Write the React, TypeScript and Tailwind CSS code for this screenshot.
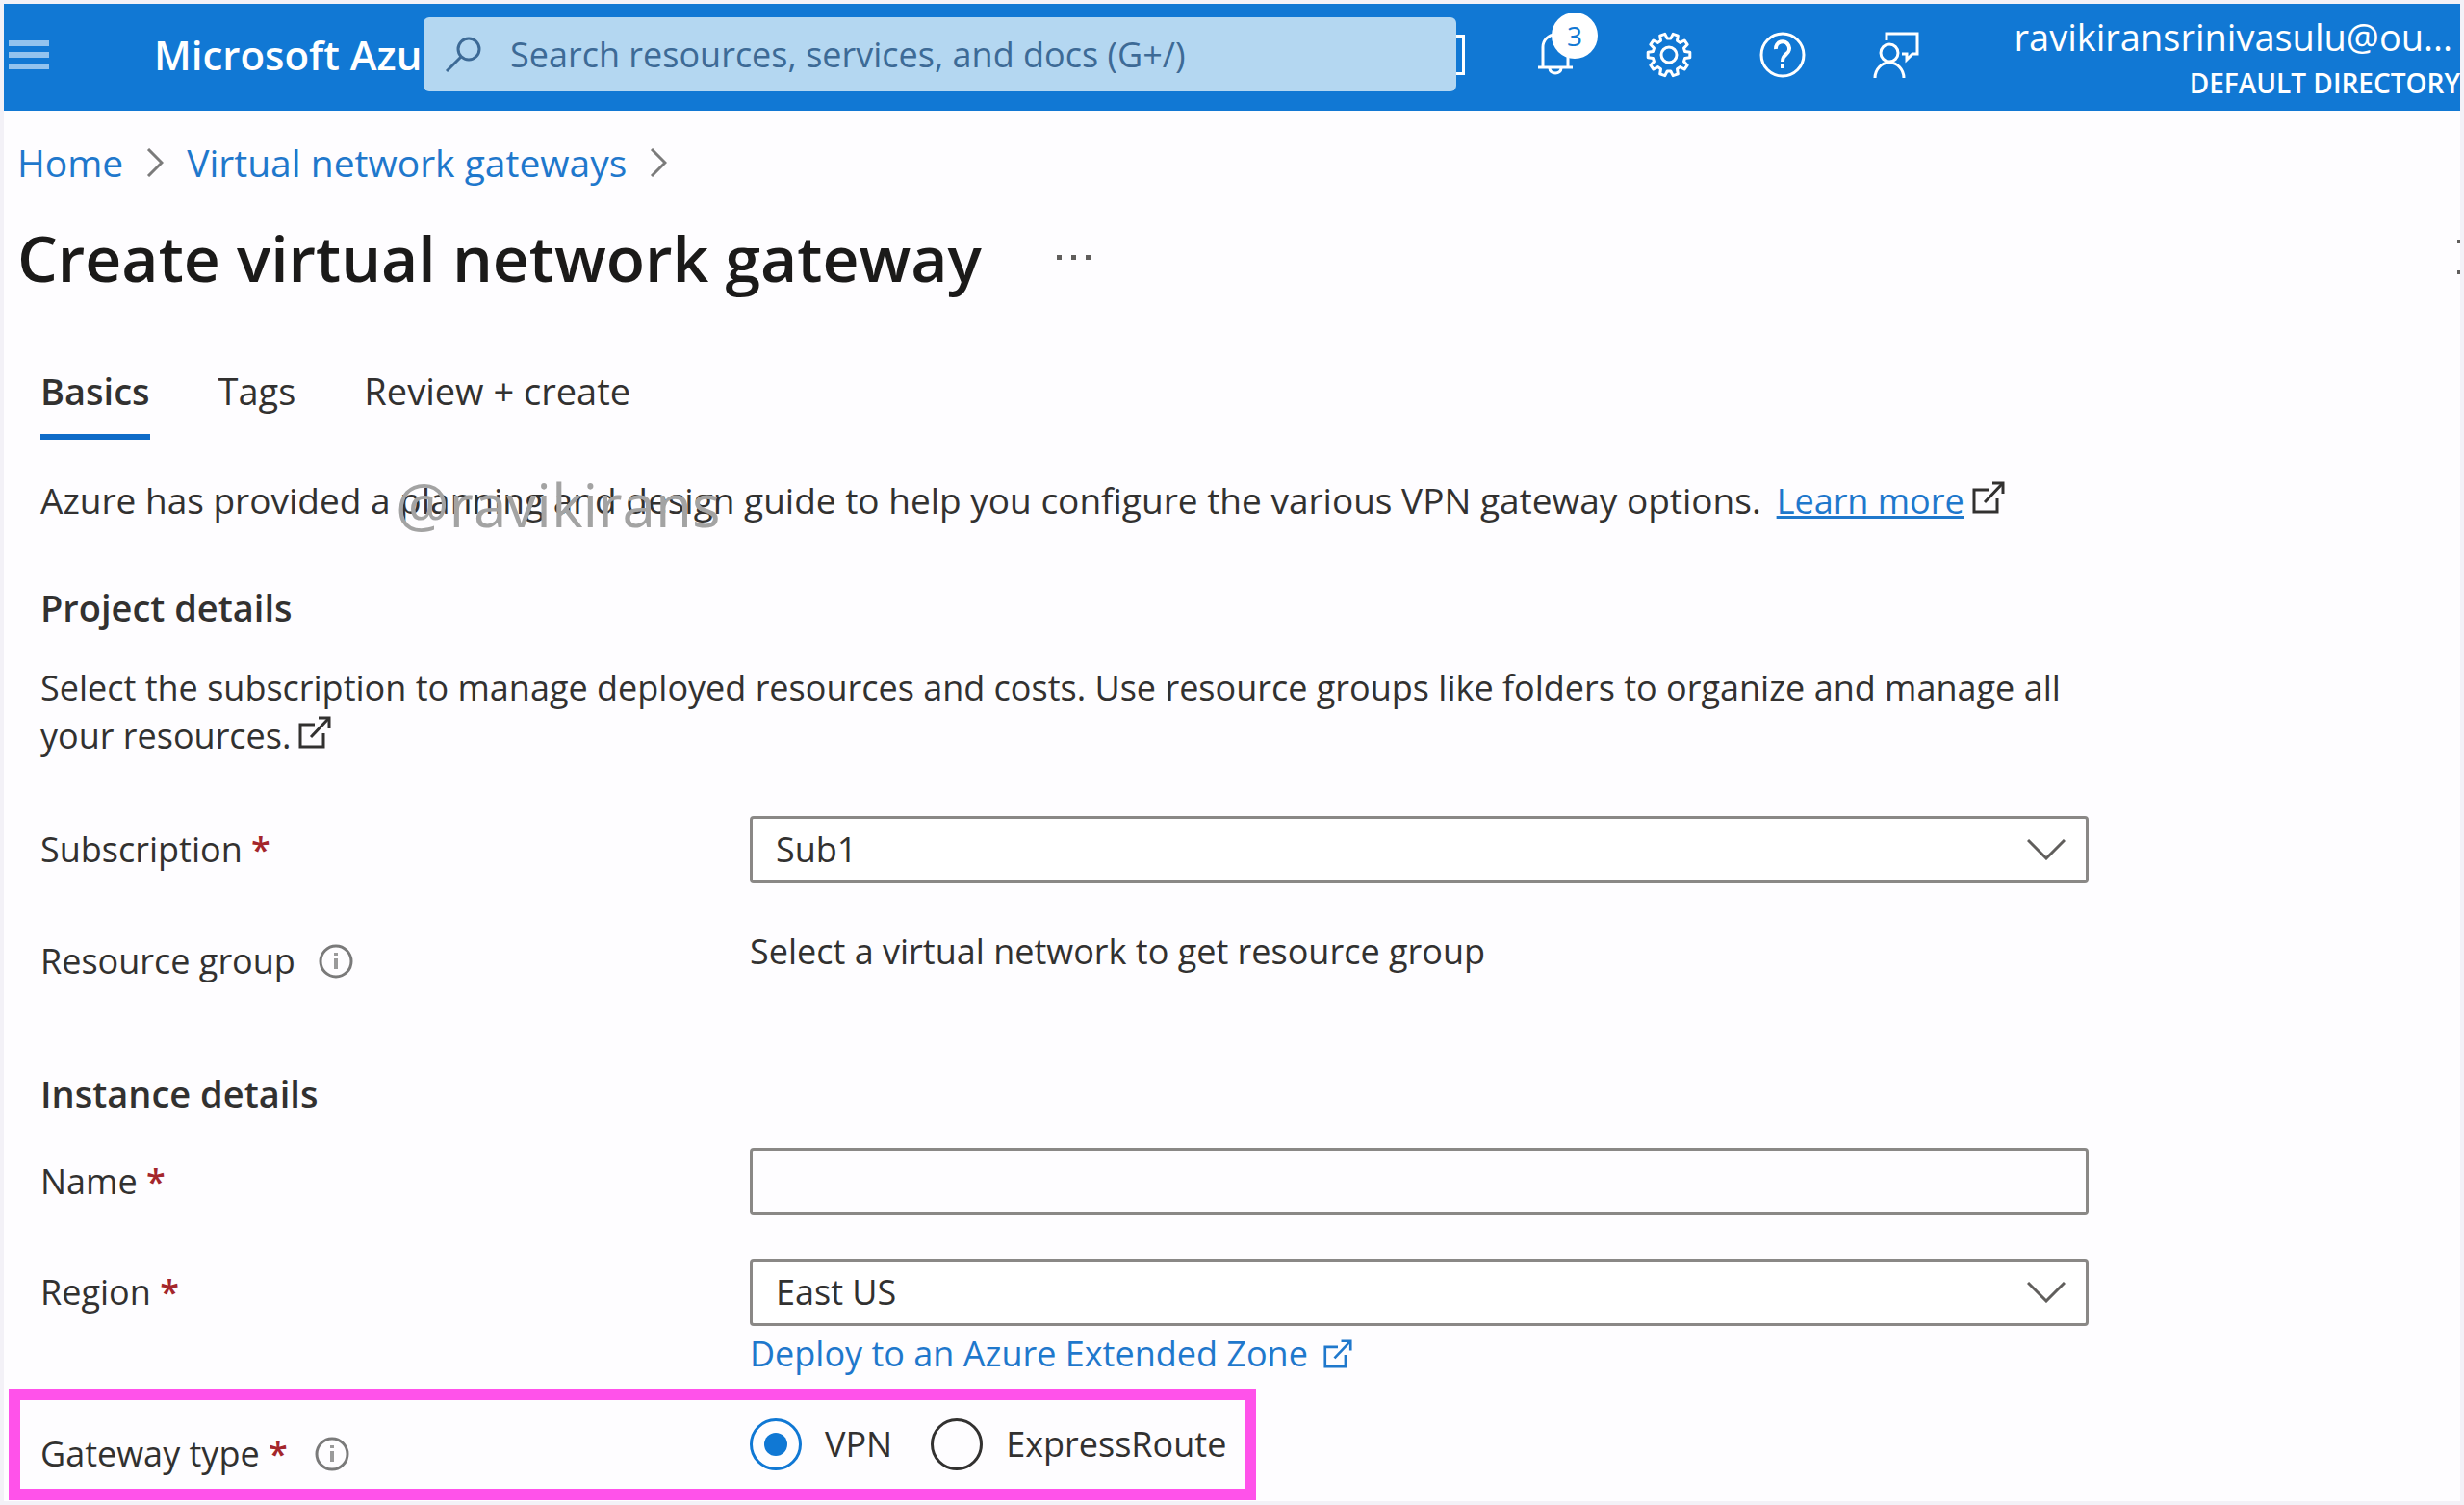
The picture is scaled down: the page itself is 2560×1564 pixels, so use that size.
import { useState } from "react";
import type { ReactNode } from "react";

function SearchIcon() {
  return (
    <svg viewBox="0 0 40 40" className="size-10 shrink-0" fill="none" stroke="#3d6a96" strokeWidth="3" aria-hidden="true">
      <circle cx="25" cy="14" r="11" />
      <path d="M17 22 L2 37" />
    </svg>
  );
}

function BellIcon() {
  return (
    <svg viewBox="0 0 48 48" className="size-12" fill="none" stroke="white" strokeWidth="3" aria-hidden="true">
      <path d="M11 37 V16 a13 13 0 0 1 26 0 V37" />
      <path d="M6 37 H42" />
      <path d="M18 38 a6 5 0 0 0 12 0" />
    </svg>
  );
}

// ten teeth, starting from the valley at twelve o'clock
const gearPoints = Array.from({ length: 10 }, (_, i) =>
  [
    [-6, 17],
    [6, 17],
    [11, 22],
    [25, 22],
  ].map(([offset, radius]) => {
    const angle = ((i * 36 + offset - 90) * Math.PI) / 180;
    return `${(24 + radius * Math.cos(angle)).toFixed(1)},${(24 + radius * Math.sin(angle)).toFixed(1)}`;
  }),
)
  .flat()
  .join(" ");

function GearIcon() {
  return (
    <svg viewBox="0 0 48 48" className="size-12" fill="none" stroke="white" strokeWidth="3" strokeLinejoin="round" aria-hidden="true">
      <circle cx="24" cy="24" r="8" />
      <polygon points={gearPoints} />
    </svg>
  );
}

function HelpIcon() {
  return (
    <svg viewBox="0 0 48 48" className="size-12" fill="none" stroke="white" aria-hidden="true">
      <circle cx="24" cy="24" r="22" strokeWidth="3" />
      <path d="M17 18 a7 7 0 1 1 11 5 C25 26 24 27 24 31" strokeWidth="4" />
      <path d="M24 34 v4" strokeWidth="4" />
    </svg>
  );
}

function FeedbackIcon() {
  return (
    <svg viewBox="0 0 48 48" className="size-12" fill="none" stroke="white" strokeWidth="3" aria-hidden="true">
      <path d="M14 9 V2 H46 V23 H41 L35 29 V23 H30" />
      <circle cx="17" cy="22" r="9" />
      <path d="M2 48 a15 16 0 0 1 30 0" />
    </svg>
  );
}

function ExternalIcon({ className }: { className: string }) {
  return (
    <svg viewBox="0 0 34 34" className={className} fill="none" stroke="currentColor" strokeWidth="3" aria-hidden="true">
      <path d="M17 9 H2 V32 H26 V18" />
      <path d="M13 22 L31 3" />
      <path d="M21 2 H32 V13" />
    </svg>
  );
}

function InfoIcon() {
  return (
    <svg viewBox="0 0 36 36" className="size-9" fill="none" aria-hidden="true">
      <circle cx="18" cy="18" r="16" stroke="#7a7a7a" strokeWidth="3" />
      <path d="M18 15 v11 M18 9 v3" stroke="#9a9a9a" strokeWidth="4" />
    </svg>
  );
}

function Crumb() {
  return (
    <svg viewBox="0 0 18 30" className="h-[30px] w-[18px]" fill="none" stroke="#7b7b7b" strokeWidth="3" aria-hidden="true">
      <path d="M2 1 L16 15 L2 29" />
    </svg>
  );
}

function Required() {
  return <span className="font-semibold text-[#a4262c]"> *</span>;
}

function Row({ label, children, className = "" }: { label: ReactNode; children: ReactNode; className?: string }) {
  return (
    <div className={`flex items-center ${className}`}>
      <div className="flex w-[737px] shrink-0 items-center">{label}</div>
      <div className="min-w-0 flex-1">{children}</div>
    </div>
  );
}

function Select({ id, options }: { id: string; options: string[] }) {
  return (
    <div className="relative">
      <select
        id={id}
        className="block h-[70px] w-full appearance-none rounded-sm border-3 border-[#8a8886] bg-white px-6 text-[#323130]"
      >
        {options.map((option) => (
          <option key={option}>{option}</option>
        ))}
      </select>
      <svg
        viewBox="0 0 40 22"
        className="pointer-events-none absolute top-6 right-6 h-[22px] w-10"
        fill="none"
        stroke="#605e5c"
        strokeWidth="3"
        aria-hidden="true"
      >
        <path d="M1 1 L20 20 L39 1" />
      </svg>
    </div>
  );
}

function Radio({ label, checked, onChange }: { label: string; checked: boolean; onChange: () => void }) {
  return (
    <label className="flex items-center gap-6">
      <span className="relative flex size-[54px] items-center justify-center">
        <input
          type="radio"
          name="gateway-type"
          checked={checked}
          onChange={onChange}
          className="peer absolute inset-0 appearance-none rounded-full border-3 border-[#323130] checked:border-[#1078d4]"
        />
        <span className="size-6 rounded-full peer-checked:bg-[#1078d4]" />
      </span>
      {label}
    </label>
  );
}

const tabs = ["Basics", "Tags", "Review + create"];

export default function App() {
  const [tab, setTab] = useState("Basics");
  const [gatewayType, setGatewayType] = useState("VPN");

  return (
    <div className="min-h-screen overflow-hidden border-4 border-[#f3f1f7] bg-[#fefdff] font-['Open_Sans','Noto_Sans',sans-serif] text-[36px] leading-[50px] text-[#323130]">
      <header className="flex h-[111px] items-center bg-[#1178d4] pb-[6px] text-white">
        <button type="button" aria-label="Show portal menu" className="ml-[5px] flex w-[42px] shrink-0 flex-col gap-[6px]">
          <span className="h-[6px] bg-[#93c3ee]" />
          <span className="h-[6px] bg-[#93c3ee]" />
          <span className="h-[6px] bg-[#93c3ee]" />
        </button>
        <a href="#" className="ml-[109px] w-[280px] shrink-0 overflow-hidden text-[42px] font-semibold whitespace-nowrap">
          Microsoft Azure
        </a>
        <label className="flex h-[77px] w-[1073px] shrink-0 items-center gap-7 rounded-md bg-[#b4d7f1] pl-[22px]">
          <SearchIcon />
          <input
            type="search"
            aria-label="Search"
            placeholder="Search resources, services, and docs (G+/)"
            className="min-w-0 flex-1 outline-none placeholder:text-[#3d6a96]"
          />
        </label>
        <span className="h-[42px] w-[9px] shrink-0 border-3 border-l-0 border-white" />
        <nav className="ml-[70px] flex items-center gap-[70px]">
          <button type="button" aria-label="Notifications" className="relative">
            <BellIcon />
            <span className="absolute -top-5 left-5 flex size-12 items-center justify-center rounded-full bg-white text-[28px] text-[#1178d4]">
              3
            </span>
          </button>
          <button type="button" aria-label="Settings">
            <GearIcon />
          </button>
          <button type="button" aria-label="Help">
            <HelpIcon />
          </button>
          <button type="button" aria-label="Feedback">
            <FeedbackIcon />
          </button>
        </nav>
        <button type="button" className="ml-auto flex shrink-0 flex-col items-end pt-2 whitespace-nowrap">
          <span className="pr-2 text-[38px]">ravikiransrinivasulu@ou...</span>
          <span className="text-[28px] leading-[46px] font-semibold">DEFAULT DIRECTORY</span>
        </button>
      </header>

      <nav aria-label="Breadcrumb" className="mt-[29px] flex items-center gap-6 pl-[14px] text-[39px] text-[#1f78cc]">
        <a href="#">Home</a>
        <Crumb />
        <a href="#">Virtual network gateways</a>
        <Crumb />
      </nav>

      <div className="mt-[29px] flex items-center pl-[14px]">
        <h1 className="text-[66px] leading-[88px] font-semibold text-[#1b1a19]">Create virtual network gateway</h1>
        <button type="button" aria-label="More" className="ml-[78px] flex gap-[10px]">
          <span className="size-[5px] bg-[#605e5c]" />
          <span className="size-[5px] bg-[#605e5c]" />
          <span className="size-[5px] bg-[#605e5c]" />
        </button>
        <button type="button" aria-label="Close" className="ml-auto flex flex-col gap-7">
          <span className="h-1 w-[3px] bg-[#605e5c]" />
          <span className="h-1 w-[3px] bg-[#605e5c]" />
        </button>
      </div>

      <div className="pl-[38px]">
        <div role="tablist" className="mt-[70px] flex gap-[71px] text-[38px]">
          {tabs.map((name) => (
            <button
              key={name}
              type="button"
              role="tab"
              aria-selected={tab === name}
              onClick={() => setTab(name)}
              className={`border-b-6 pb-5 ${tab === name ? "border-[#0f6cc9] font-semibold" : "border-transparent"}`}
            >
              {name}
            </button>
          ))}
        </div>

        <p className="relative mt-[38px] text-[37px]">
          Azure has provided a planning and design guide to help you configure the various VPN gateway options.
          <a href="#" className="ml-4 text-[36px] text-[#1f78cc] underline">
            Learn more
          </a>
          <ExternalIcon className="ml-2 inline size-[34px] align-baseline" />
          <span className="pointer-events-none absolute top-1 left-[369px] text-[62px] text-[#a3a3a3]">@ravikirans</span>
        </p>

        <h2 className="mt-[60px] text-[38px] font-semibold">Project details</h2>
        <p className="mt-[34px] max-w-[2150px]">
          Select the subscription to manage deployed resources and costs. Use resource groups like folders to organize and
          manage all your resources.
          <ExternalIcon className="ml-2 inline size-[34px] align-baseline" />
        </p>

        <div className="max-w-[2128px]">
          <Row
            className="mt-[58px]"
            label={
              <label htmlFor="subscription">
                Subscription
                <Required />
              </label>
            }
          >
            <Select id="subscription" options={["Sub1"]} />
          </Row>
          <Row
            className="mt-[46px]"
            label={
              <>
                Resource group
                <button type="button" aria-label="About resource group" className="ml-6">
                  <InfoIcon />
                </button>
              </>
            }
          >
            <p className="pb-5">Select a virtual network to get resource group</p>
          </Row>

          <h2 className="mt-[77px] text-[38px] font-semibold">Instance details</h2>
          <Row
            className="mt-[32px]"
            label={
              <label htmlFor="name">
                Name
                <Required />
              </label>
            }
          >
            <input id="name" type="text" className="block h-[70px] w-full rounded-sm border-3 border-[#8a8886] px-6" />
          </Row>
          <Row
            className="mt-[45px]"
            label={
              <label htmlFor="region">
                Region
                <Required />
              </label>
            }
          >
            <Select id="region" options={["East US"]} />
          </Row>
          <a href="#" className="ml-[737px] flex items-center gap-4 pt-1 text-[#1f78cc]">
            Deploy to an Azure Extended Zone
            <ExternalIcon className="size-[30px]" />
          </a>
        </div>
      </div>

      <div className="mt-[11px] ml-[5px] flex h-[116px] w-[1296px] items-center border-12 border-[#ff52ea] pl-[21px]">
        <div className="flex w-[737px] shrink-0 items-center pt-5">
          <span>
            Gateway type
            <Required />
          </span>
          <button type="button" aria-label="About gateway type" className="ml-7">
            <InfoIcon />
          </button>
        </div>
        <div role="radiogroup" aria-label="Gateway type" className="flex items-center gap-10">
          {["VPN", "ExpressRoute"].map((type) => (
            <Radio key={type} label={type} checked={gatewayType === type} onChange={() => setGatewayType(type)} />
          ))}
        </div>
      </div>
    </div>
  );
}
